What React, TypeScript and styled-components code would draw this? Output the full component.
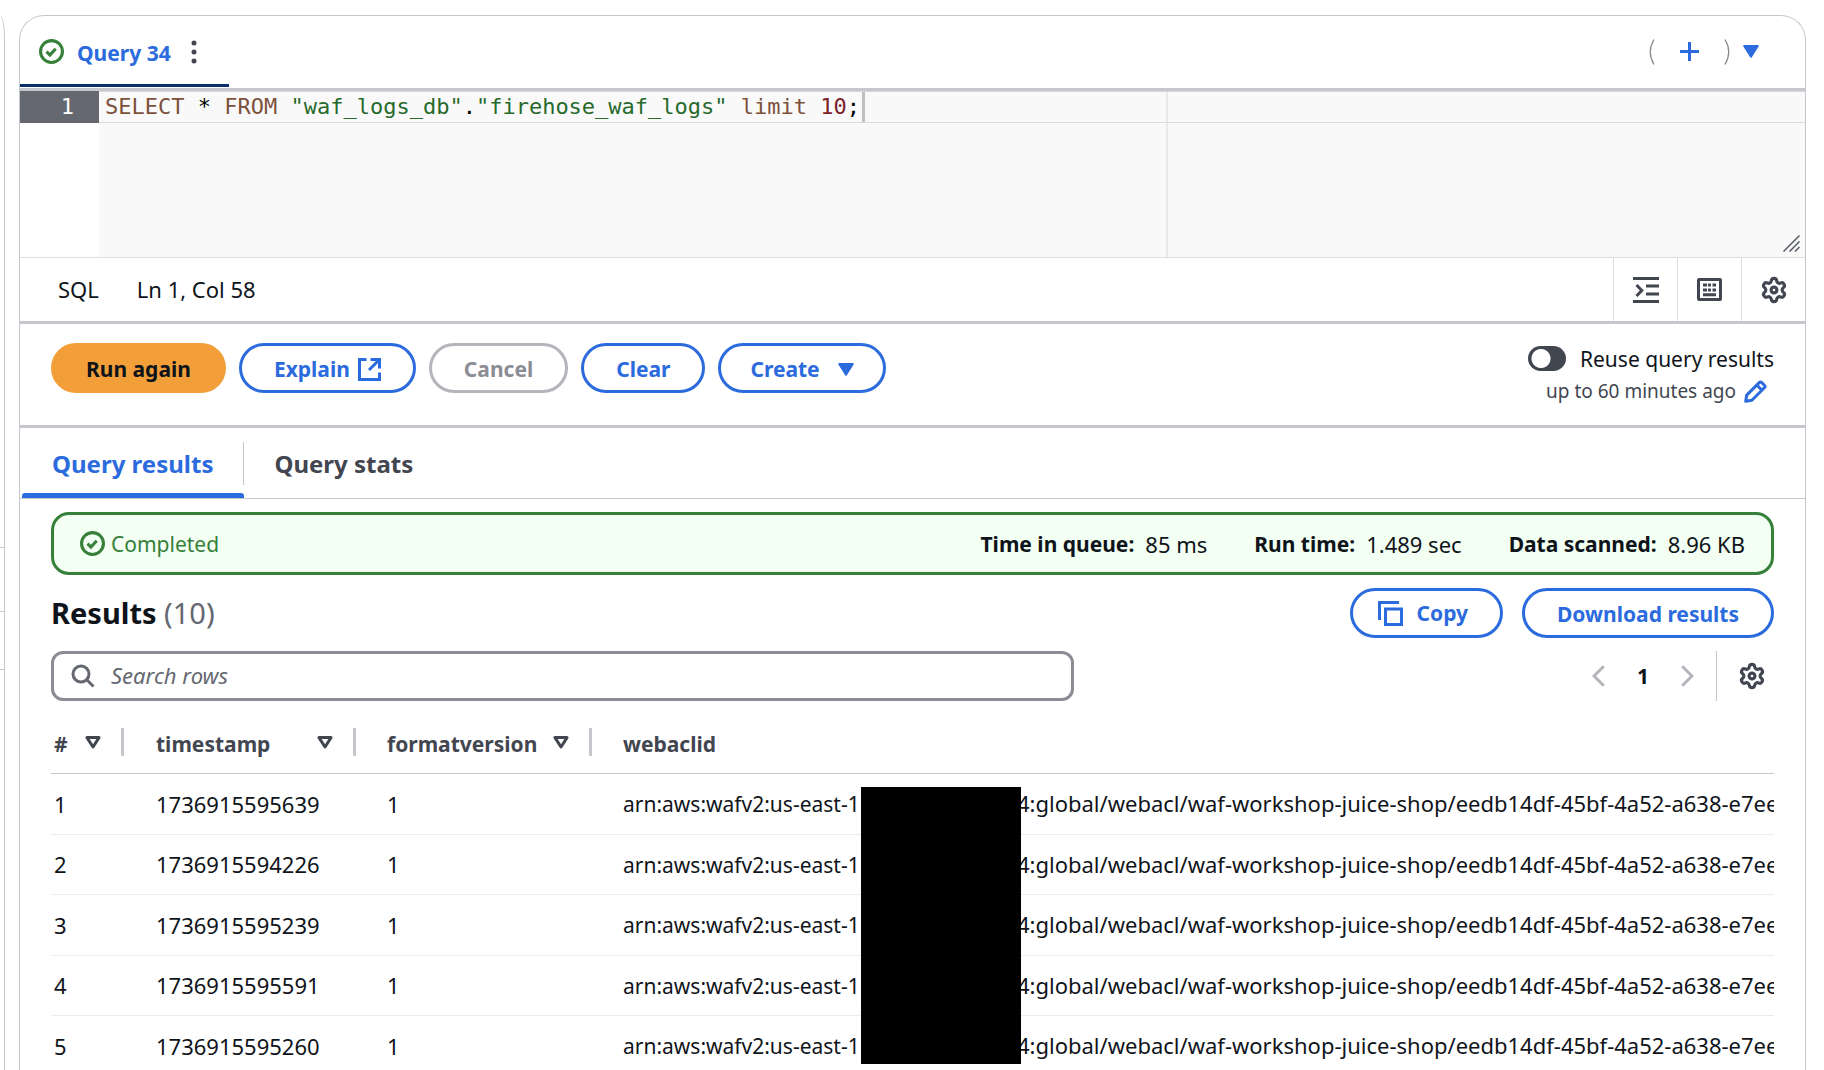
import React, { useState } from 'react';
import styled, { createGlobalStyle, css } from 'styled-components';

const color = {
  ink: '#0f141a',
  text: '#424650',
  muted: '#656871',
  blue: '#2b6bdd',
  navy: '#0b2f6b',
  line: '#c6c6cd',
  soft: '#ebebf0',
  field: '#8c8c94',
  green: '#37803a',
  greenBg: '#f2fff2',
  orange: '#f29f3a',
};

const sans = "'Noto Sans', 'Open Sans', sans-serif";
const mono = "'DejaVu Sans Mono', 'Liberation Mono', monospace";

const GlobalStyle = createGlobalStyle`
  *, *::before, *::after { box-sizing: border-box; }
  body { margin: 0; background: #fff; color: ${color.ink}; font: 400 21px/30px ${sans}; }
  button, input { font: inherit; color: inherit; }
  button { margin: 0; padding: 0; border: 0; background: none; cursor: pointer; }
  svg { display: block; flex: none; }
`;

const Page = styled.div`
  display: flex;
  gap: 14px;
  height: 100vh;
  padding: 15px 18px 0 0;
  overflow: hidden;
`;

const SidePanel = styled.aside`
  flex: none;
  width: 5px;
  padding-top: 532px;
  border: solid ${color.line};
  border-width: 0 1px 0 0;
  border-top-right-radius: 5px 25px;
`;

const SideSection = styled.div<{ $height: number }>`
  height: ${(p) => p.$height}px;
  border-top: 1px solid ${color.line};
`;

const Card = styled.main`
  flex: 1;
  min-width: 0;
  border: solid ${color.line};
  border-width: 1px 1px 0;
  border-radius: 25px 25px 0 0;
`;

const QueryBar = styled.header`
  display: flex;
  justify-content: space-between;
  height: 75px;
  padding-right: 46px;
  border-bottom: 3px solid ${color.line};
`;

const QueryTab = styled.div`
  display: flex;
  align-items: center;
  gap: 13px;
  height: 71px;
  padding: 3px 25px 0 19px;
  border-bottom: 3px solid ${color.navy};
`;

const QueryName = styled.button`
  padding-top: 3px;
  color: ${color.blue};
  font-weight: 700;
`;

const AddTools = styled.div`
  display: flex;
  align-items: center;
  gap: 13px;
  padding-bottom: 1px;
  color: ${color.blue};
`;

const Bracketed = styled.span`
  display: flex;
  align-items: center;
  gap: 25px;
`;

const Editor = styled.div`
  position: relative;
  display: flex;
  height: 167px;
  border-bottom: 1px solid #dedee3;
  font: 22px/31px ${mono};
`;

const Gutter = styled.div`
  flex: none;
  width: 79px;
`;

const LineNumber = styled.div`
  height: 32px;
  padding-right: 25px;
  background: #656871;
  color: #fff;
  text-align: right;
`;

const CodeArea = styled.div`
  flex: 1;
  min-width: 0;
  background: linear-gradient(#e8e8e8, #e8e8e8) 1067px 0 / 2px 100% no-repeat #f9f9f9;
`;

const CodeLine = styled.div`
  display: flex;
  height: 32px;
  padding-left: 6px;
  border: solid #dadadd;
  border-width: 1px 0;
  line-height: 30px;
  outline: none;
  white-space: pre;
`;

const Token = styled.span<{ $kind?: 'keyword' | 'string' | 'number' }>`
  color: ${(p) =>
    p.$kind === 'keyword' ? '#7d513c' : p.$kind === 'string' ? '#276a2c' : p.$kind === 'number' ? '#7d2127' : '#000'};
`;

const Caret = styled.span`
  width: 3px;
  margin-left: 2px;
  background: #bfbfbf;
`;

const ResizeHandle = styled.span`
  position: absolute;
  right: 5px;
  bottom: 5px;
`;

const StatusBar = styled.div`
  display: flex;
  align-items: stretch;
  justify-content: space-between;
  height: 66px;
  border-bottom: 3px solid ${color.line};
`;

const StatusText = styled.div`
  display: flex;
  align-items: center;
  gap: 38px;
  padding: 0 0 2px 38px;
  font-size: 22px;
`;

const StatusTools = styled.div`
  display: flex;
`;

const StatusButton = styled.button`
  display: grid;
  place-items: center;
  width: 64px;
  border-left: 1px solid #dedee3;
  color: ${color.text};
`;

const ActionBar = styled.div`
  display: flex;
  justify-content: space-between;
  height: 104px;
  padding: 19px 31px 0;
  border-bottom: 3px solid ${color.line};
`;

const ButtonRow = styled.div<{ $gap: number }>`
  display: flex;
  align-items: flex-start;
  gap: ${(p) => p.$gap}px;
`;

const PillButton = styled.button<{ $tone?: 'primary'; $kind?: 'menu' | 'icon' }>`
  display: flex;
  align-items: center;
  gap: ${(p) => (p.$kind === 'menu' ? 18 : p.$kind === 'icon' ? 14 : 8)}px;
  height: 50px;
  padding: ${(p) => (p.$kind === 'menu' ? '2px 29px 0' : p.$kind === 'icon' ? '0 32px 0 25px' : '2px 32px 0')};
  border: 3px solid ${color.blue};
  border-radius: 25px;
  color: ${color.blue};
  font-weight: 700;
  font-size: 21px;
  white-space: nowrap;

  &:disabled {
    border-color: #b4b4bb;
    color: ${color.field};
    cursor: default;
  }

  ${(p) =>
    p.$tone === 'primary' &&
    css`
      border-color: ${color.orange};
      background: ${color.orange};
      color: ${color.ink};
    `}
`;

const Reuse = styled.div`
  display: flex;
  flex-direction: column;
  align-items: flex-end;
`;

const ReuseLabel = styled.label`
  display: flex;
  align-items: center;
  gap: 14px;

  span { padding-top: 1px; }
`;

const Toggle = styled.input`
  appearance: none;
  width: 38px;
  height: 25px;
  margin: 0;
  border-radius: 13px;
  background: radial-gradient(circle at 13px 50%, #fff 9px, transparent 10px) ${color.text};

  &:checked {
    background: radial-gradient(circle at 25px 50%, #fff 9px, transparent 10px) ${color.blue};
  }
`;

const ReuseHint = styled.div`
  display: flex;
  align-items: center;
  gap: 8px;
  padding-right: 7px;
  color: ${color.text};
  font-size: 19px;
  line-height: 35px;
`;

const Tabs = styled.div`
  display: flex;
  height: 71px;
  padding-left: 2px;
  border-bottom: 1px solid ${color.line};
`;

const Tab = styled.button<{ $active?: boolean }>`
  display: flex;
  flex-direction: column;
  justify-content: space-between;
  color: ${(p) => (p.$active ? color.blue : color.text)};
  font-weight: 700;
  font-size: 24px;

  &::after {
    content: '';
    width: 100%;
    height: 5px;
    border-radius: 3px 3px 0 0;
    background: ${(p) => (p.$active ? color.blue : 'transparent')};
  }
`;

const TabLabel = styled.span`
  height: 43px;
  margin-top: 14px;
  padding: 0 30px;
  line-height: 44px;

  ${Tab}:first-child & {
    border-right: 1px solid ${color.line};
  }
`;

const Content = styled.section`
  padding: 13px 31px 0;
`;

const Alert = styled.div`
  display: flex;
  align-items: center;
  justify-content: space-between;
  height: 63px;
  padding: 0 26px;
  border: 3px solid ${color.green};
  border-radius: 18px;
  background: ${color.greenBg};
`;

const AlertState = styled.div`
  display: flex;
  align-items: center;
  gap: 6px;
  color: ${color.green};
`;

const Stats = styled.dl`
  display: flex;
  gap: 47px;
  margin: 0;
`;

const Stat = styled.div`
  display: flex;
  gap: 11px;

  dt { font-weight: 700; }
  dd { margin: 0; font-size: 22px; }
`;

const ResultsHeader = styled.div`
  display: flex;
  align-items: center;
  justify-content: space-between;
  margin-top: 13px;
`;

const Heading = styled.h2`
  margin: 0;
  font-size: 29px;
  line-height: 40px;

  span { color: ${color.muted}; font-weight: 400; }
`;

const FilterRow = styled.div`
  display: flex;
  justify-content: space-between;
  margin-top: 13px;
`;

const SearchBox = styled.label`
  display: flex;
  align-items: center;
  gap: 16px;
  flex: 0 0 1023px;
  height: 50px;
  padding: 0 17px;
  border: 3px solid ${color.field};
  border-radius: 12px;
  color: ${color.muted};
`;

const SearchInput = styled.input`
  flex: 1;
  min-width: 0;
  padding: 0 0 2px;
  border: 0;
  outline: 0;
  background: none;
  font-size: 22px;

  &::placeholder { color: ${color.muted}; font-style: italic; opacity: 1; }
`;

const Pager = styled.nav`
  display: flex;
  align-items: center;
  color: #b4b4bb;
`;

const PageNumber = styled.button`
  width: 76px;
  color: ${color.ink};
  font-weight: 700;
`;

const Preferences = styled.button`
  height: 50px;
  margin-left: 22px;
  padding: 0 8px 0 21px;
  border-left: 1px solid ${color.line};
  color: ${color.text};
`;

const TableWrap = styled.div`
  position: relative;
  overflow: hidden;
`;

const Table = styled.table`
  width: 100%;
  border-collapse: collapse;
  table-layout: fixed;
  white-space: nowrap;
`;

const Th = styled.th<{ $width?: number }>`
  width: ${(p) => (p.$width ? `${p.$width}px` : 'auto')};
  height: 72px;
  padding: 0;
  border-bottom: 1px solid ${color.line};
  color: ${color.text};
  text-align: left;
`;

const HeadCell = styled.div<{ $inset: number; $divided: boolean }>`
  display: flex;
  align-items: center;
  justify-content: space-between;
  height: 28px;
  margin-top: 11px;
  padding-left: ${(p) => p.$inset}px;
  padding-right: 20px;
  border-right: ${(p) => (p.$divided ? `3px solid ${color.line}` : '0')};

  span { padding-top: 3px; }
`;

const Td = styled.td<{ $inset: number }>`
  height: 60px;
  padding: 0 0 0 ${(p) => p.$inset}px;
  border-bottom: 1px solid ${color.soft};
  font-size: 22px;

  tr:nth-child(odd) > & { height: 61px; }
`;

const ArnRegion = styled.span`
  display: inline-block;
  width: 394px;
  font-size: 21px;
`;

const Redaction = styled.div`
  position: absolute;
  top: 86px;
  left: 810px;
  width: 160px;
  height: 277px;
  background: #000;
`;

type IconProps = { size?: number };

const Check = ({ size = 25 }: IconProps) => (
  <svg width={size} height={size} viewBox="0 0 16 16" fill="none" stroke={color.green} strokeWidth="2">
    <circle cx="8" cy="8" r="7" />
    <path d="M4.8 8.1 7 10.2l3.7-4" />
  </svg>
);

const Gear = () => (
  <svg width="28" height="28" viewBox="0 0 24 24" fill="none" stroke="currentColor" strokeWidth="2.7">
    <path d="M9.671 4.136a2.34 2.34 0 0 1 4.659 0 2.34 2.34 0 0 0 3.319 1.915 2.34 2.34 0 0 1 2.33 4.033 2.34 2.34 0 0 0 0 3.831 2.34 2.34 0 0 1-2.33 4.033 2.34 2.34 0 0 0-3.319 1.915 2.34 2.34 0 0 1-4.659 0 2.34 2.34 0 0 0-3.32-1.915 2.34 2.34 0 0 1-2.33-4.033 2.34 2.34 0 0 0 0-3.831A2.34 2.34 0 0 1 6.35 6.051a2.34 2.34 0 0 0 3.319-1.915" />
    <circle cx="12" cy="12" r="2.5" />
  </svg>
);

const CaretDown = () => (
  <svg width="16" height="13" viewBox="0 0 16 13" fill={color.blue} stroke={color.blue} strokeWidth="2" strokeLinejoin="round">
    <path d="M1.2 1h13.6L8 11.6z" />
  </svg>
);

const SortCaret = () => (
  <svg width="16" height="13" viewBox="0 0 16 13" fill="none" stroke={color.text} strokeWidth="3" strokeLinejoin="round">
    <path d="M2 1.6h12L8 11z" />
  </svg>
);

const Chevron = ({ flip }: { flip?: boolean }) => (
  <svg width="13" height="22" viewBox="0 0 13 22" fill="none" stroke="currentColor" strokeWidth="3">
    <path d={flip ? 'M1.2 1.2 11 11l-9.8 9.8' : 'M11.8 1.2 2 11l9.8 9.8'} />
  </svg>
);

const Bracket = ({ flip }: { flip?: boolean }) => (
  <svg width="6" height="26" viewBox="0 0 6 26" fill="none" stroke="#8c8c94" strokeWidth="1.3">
    <path d={flip ? 'M1 .5Q8.500 13 1 25.500' : 'M5 .5Q-2.500 13 5 25.500'} />
  </svg>
);

const rows = ['1736915595639', '1736915594226', '1736915595239', '1736915595591', '1736915595260'];

const columns: { name: string; width?: number; inset: number }[] = [
  { name: '#', width: 73, inset: 3 },
  { name: 'timestamp', width: 232, inset: 32 },
  { name: 'formatversion', width: 236, inset: 31 },
  { name: 'webaclid', inset: 31 },
];

export default function App() {
  const [reuse, setReuse] = useState(false);
  const [search, setSearch] = useState('');
  return (
    <>
      <GlobalStyle />
      <Page>
        <SidePanel aria-label="Data panel">
          <SideSection $height={64} />
          <SideSection $height={58} />
          <SideSection $height={400} />
        </SidePanel>
        <Card>
          <QueryBar>
            <QueryTab>
              <Check />
              <QueryName>Query 34</QueryName>
              <button aria-label="Query actions">
                <svg width="20" height="24" viewBox="0 0 20 24" fill={color.text}>
                  <circle cx="10" cy="3" r="2.500" />
                  <circle cx="10" cy="12" r="2.500" />
                  <circle cx="10" cy="21" r="2.500" />
                </svg>
              </button>
            </QueryTab>
            <AddTools>
              <Bracketed>
                <Bracket />
                <button aria-label="New query">
                  <svg width="19" height="19" viewBox="0 0 19 19" stroke="currentColor" strokeWidth="3">
                    <path d="M9.500 0v19M0 9.500h19" />
                  </svg>
                </button>
                <Bracket flip />
              </Bracketed>
              <button aria-label="Open queries">
                <CaretDown />
              </button>
            </AddTools>
          </QueryBar>

          <Editor>
            <Gutter>
              <LineNumber>1</LineNumber>
            </Gutter>
            <CodeArea>
              <CodeLine role="textbox" aria-label="SQL editor" contentEditable suppressContentEditableWarning spellCheck={false}>
                <Token $kind="keyword">SELECT</Token>
                <Token> * </Token>
                <Token $kind="keyword">FROM </Token>
                <Token $kind="string">"waf_logs_db"</Token>
                <Token>.</Token>
                <Token $kind="string">"firehose_waf_logs"</Token>
                <Token $kind="keyword"> limit </Token>
                <Token $kind="number">10</Token>
                <Token>;</Token>
                <Caret />
              </CodeLine>
            </CodeArea>
            <ResizeHandle>
              <svg width="17" height="17" viewBox="0 0 17 17" fill="none" stroke="#545b64" strokeWidth="1.5">
                <path d="M.5 16.500 16.500.5M6.500 16.500l10-10M12 16.500l4.500-4.500" />
              </svg>
            </ResizeHandle>
          </Editor>

          <StatusBar>
            <StatusText>
              <span>SQL</span>
              <span>Ln 1, Col 58</span>
            </StatusText>
            <StatusTools>
              <StatusButton aria-label="Format query">
                <svg width="26" height="26" viewBox="0 0 26 26" fill="none" stroke="currentColor" strokeWidth="3">
                  <path d="M0 1.500h26M13 9h13M13 17h13M0 24.500h26M3.500 8l5.300 5.500-5.300 5.500" />
                </svg>
              </StatusButton>
              <StatusButton aria-label="Keyboard shortcuts">
                <svg width="25" height="23" viewBox="0 0 25 23" fill="none" stroke="currentColor" strokeWidth="3">
                  <rect x="1.500" y="1.500" width="22" height="20" rx="0.500" />
                  <path d="M6 7h4M11 7h3M15.500 7h3.500M6 12h4M11 12h3M15.500 12h3.500M6 16.700h13" />
                </svg>
              </StatusButton>
              <StatusButton aria-label="Editor preferences">
                <Gear />
              </StatusButton>
            </StatusTools>
          </StatusBar>

          <ActionBar>
            <ButtonRow $gap={13}>
              <PillButton $tone="primary">Run again</PillButton>
              <PillButton>
                Explain
                <svg width="23" height="23" viewBox="0 0 23 23" fill="none" stroke="currentColor" strokeWidth="3">
                  <path d="M8.500 1.500h-7v20h20v-7M12.500 1.500h9v9M21 2 11 12" />
                </svg>
              </PillButton>
              <PillButton disabled>Cancel</PillButton>
              <PillButton>Clear</PillButton>
              <PillButton $kind="menu">
                Create
                <CaretDown />
              </PillButton>
            </ButtonRow>
            <Reuse>
              <ReuseLabel>
                <Toggle type="checkbox" role="switch" checked={reuse} onChange={(e) => setReuse(e.target.checked)} />
                <span>Reuse query results</span>
              </ReuseLabel>
              <ReuseHint>
                up to 60 minutes ago
                <button aria-label="Edit reuse period">
                  <svg width="23" height="23" viewBox="0 0 23 23" fill="none" stroke={color.blue} strokeWidth="3" strokeLinejoin="round">
                    <path d="M1.700 21.300l1-6.200L15.200 2.600q1.300-1.300 2.600 0l2.600 2.600q1.300 1.300 0 2.600L7.900 20.300zM12.800 5l5.200 5.200" />
                  </svg>
                </button>
              </ReuseHint>
            </Reuse>
          </ActionBar>

          <Tabs role="tablist">
            <Tab role="tab" aria-selected $active>
              <TabLabel>Query results</TabLabel>
            </Tab>
            <Tab role="tab" aria-selected={false}>
              <TabLabel>Query stats</TabLabel>
            </Tab>
          </Tabs>

          <Content>
            <Alert role="status">
              <AlertState>
                <Check />
                Completed
              </AlertState>
              <Stats>
                <Stat><dt>Time in queue:</dt><dd>85 ms</dd></Stat>
                <Stat><dt>Run time:</dt><dd>1.489 sec</dd></Stat>
                <Stat><dt>Data scanned:</dt><dd>8.96 KB</dd></Stat>
              </Stats>
            </Alert>

            <ResultsHeader>
              <Heading>Results <span>(10)</span></Heading>
              <ButtonRow $gap={19}>
                <PillButton $kind="icon">
                  <svg width="25" height="25" viewBox="0 0 25 25" fill="none" stroke="currentColor" strokeWidth="3">
                    <path d="M1.500 19V1.500H21M7.500 8h16v15.500h-16z" />
                  </svg>
                  Copy
                </PillButton>
                <PillButton>Download results</PillButton>
              </ButtonRow>
            </ResultsHeader>

            <FilterRow>
              <SearchBox>
                <svg width="24" height="24" viewBox="0 0 24 24" fill="none" stroke="currentColor" strokeWidth="3">
                  <circle cx="10" cy="10" r="8" />
                  <path d="m15.500 15.500 7 7" />
                </svg>
                <SearchInput
                  aria-label="Search rows"
                  placeholder="Search rows"
                  value={search}
                  onChange={(e) => setSearch(e.target.value)}
                />
              </SearchBox>
              <Pager aria-label="Pagination">
                <button aria-label="Previous page"><Chevron /></button>
                <PageNumber>1</PageNumber>
                <button aria-label="Next page"><Chevron flip /></button>
                <Preferences aria-label="Table preferences"><Gear /></Preferences>
              </Pager>
            </FilterRow>

            <TableWrap>
              <Table>
                <thead>
                  <tr>
                    {columns.map((c) => (
                      <Th key={c.name} $width={c.width} scope="col">
                        <HeadCell $inset={c.inset} $divided={!!c.width}>
                          <span>{c.name}</span>
                          {c.width && <SortCaret />}
                        </HeadCell>
                      </Th>
                    ))}
                  </tr>
                </thead>
                <tbody>
                  {rows.map((stamp, i) => (
                    <tr key={stamp}>
                      <Td $inset={3}>{i + 1}</Td>
                      <Td $inset={32}>{stamp}</Td>
                      <Td $inset={31}>1</Td>
                      <Td $inset={31}>
                        <ArnRegion>arn:aws:wafv2:us-east-1</ArnRegion>
                        4:global/webacl/waf-workshop-juice-shop/eedb14df-45bf-4a52-a638-e7ee
                      </Td>
                    </tr>
                  ))}
                </tbody>
              </Table>
              <Redaction />
            </TableWrap>
          </Content>
        </Card>
      </Page>
    </>
  );
}
